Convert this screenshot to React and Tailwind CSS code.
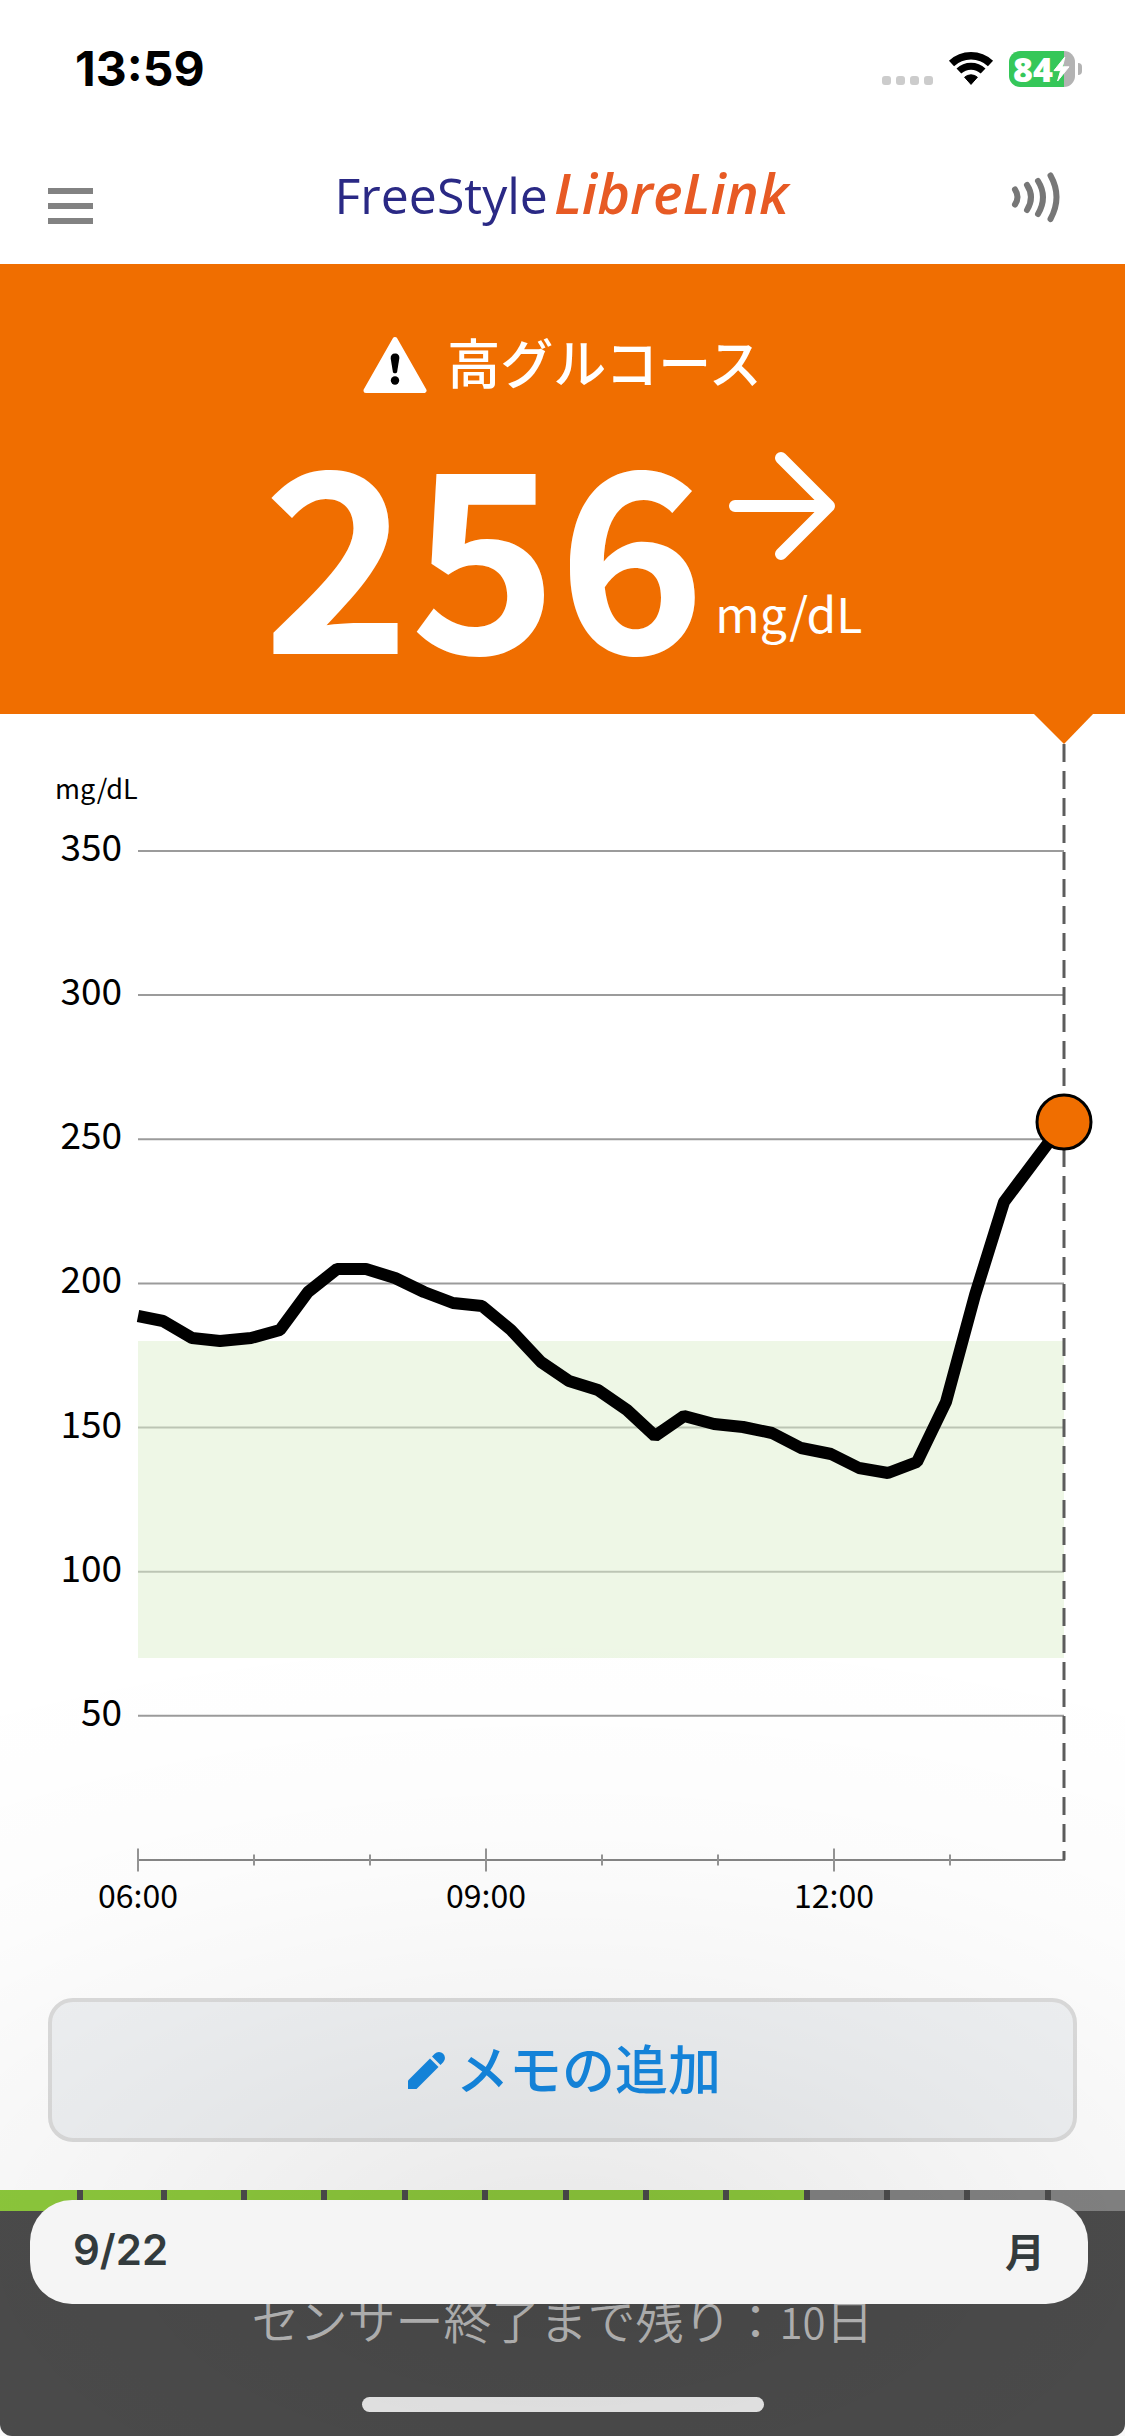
import React from 'react';

const JP = "font-['Noto_Sans_CJK_JP',sans-serif]";

const GRID = [350, 300, 250, 200, 150, 100, 50];
const yOf = (mgdl) => 1146 - (mgdl * 144.15) / 50;

const TICKS = [
  { x: 138, label: '06:00' },
  { x: 254 },
  { x: 370 },
  { x: 486, label: '09:00' },
  { x: 602 },
  { x: 718 },
  { x: 834, label: '12:00' },
  { x: 950 },
];

const TRACE = [
  [138, 602], [163, 607], [192, 624], [220, 627], [251, 624], [280, 616],
  [308, 578], [337, 555], [366, 555], [395, 564], [424, 578], [453, 589],
  [482, 592], [511, 616], [541, 648], [569, 667], [598, 676], [627, 696],
  [655, 722], [684, 702], [714, 710], [743, 713], [772, 719], [801, 734],
  [831, 740], [859, 754], [888, 759], [917, 748], [946, 688], [975, 581],
  [1004, 488], [1064, 408],
];

const DAYS = [77, 78, 74, 74, 75, 74, 75, 74, 74, 75, 74, 74, 75, 74];
const DAYS_USED = 10;

function StatusBar() {
  return (
    <div className="flex h-[138px] items-center justify-between pl-[75px] pr-[43px]">
      <span className="font-['Inter',sans-serif] text-[48px] font-bold leading-[48px] text-black">
        13:59
      </span>
      <div className="flex items-center gap-[15px]">
        <svg width="51" height="36" viewBox="0 0 51 36" fill="#cccccc" aria-hidden="true">
          {[0, 14, 28, 42].map((x) => (
            <rect key={x} x={x} y="25" width="9" height="9" rx="3" />
          ))}
        </svg>
        <svg width="46" height="36" viewBox="0 0 46 36" fill="none" aria-label="Wi-Fi">
          <path d="M3.5 12.4a28.5 28.5 0 0 1 39 0" stroke="#000" strokeWidth="7.5" />
          <path d="M10.9 20a17.7 17.7 0 0 1 24.2 0" stroke="#000" strokeWidth="7" />
          <path d="M16.6 26.2a9.8 9.8 0 0 1 12.8 0L23 33.4z" fill="#000" stroke="#000" strokeWidth="1" strokeLinejoin="round" />
        </svg>
        <div className="flex items-center gap-[3px]">
          <div className="flex h-9 w-[66px] items-center rounded-[11px] bg-[linear-gradient(90deg,#35c759_55px,#b3b3b3_55px)] pl-1">
            <span className="font-['Open_Sans',sans-serif] text-[34px] font-extrabold leading-9 text-white">
              84
            </span>
            <svg className="shrink-0" width="17" height="26" viewBox="0 0 17 26" fill="#fff" aria-hidden="true">
              <path d="M11.8 1 1 14.6h6.6L4.6 25 16 10.8H9.6z" stroke="#fff" strokeWidth="1" strokeLinejoin="round" />
            </svg>
          </div>
          <div className="h-3 w-1 rounded-r-full bg-[#b3b3b3]" />
        </div>
      </div>
    </div>
  );
}

function NavBar() {
  return (
    <div className="grid h-[126px] grid-cols-[1fr_auto_1fr] items-center pl-12 pr-16">
      <button type="button" aria-label="メニュー" className="flex w-[45px] flex-col gap-[9px] pt-[10px]">
        <span className="h-1.5 w-full bg-[#828282]" />
        <span className="h-1.5 w-full bg-[#828282]" />
        <span className="h-1.5 w-full bg-[#828282]" />
      </button>
      <h1 className="flex items-baseline gap-1.5 pb-4 pl-3.5 font-['Open_Sans',sans-serif] leading-[60px]">
        <span className="text-[50px] font-medium text-[#2a2985]">FreeStyle</span>
        <span className="text-[56px] font-semibold italic text-[#e75a24]">LibreLink</span>
      </h1>
      <button type="button" aria-label="スキャン" className="justify-self-end pb-2">
        <svg width="50" height="54" viewBox="0 0 50 54" fill="none" stroke="#777" strokeWidth="6" strokeLinecap="round">
          <path d="M4 19.500q5 7.500 0 15" />
          <path d="M16 15q8 12 0 25" />
          <path d="M27 11q10 16 0 33" />
          <path d="M39.500 5.500q12 21.500 0 43.500" />
        </svg>
      </button>
    </div>
  );
}

function Reading() {
  return (
    <section className={`${JP} flex flex-col items-center bg-[#f06e00] pb-[69px] pt-[70px] text-white`}>
      <div className="flex items-center gap-5">
        <svg width="64" height="58" viewBox="0 0 64 58" aria-hidden="true">
          <path d="M32 3.500 61 54.500H3z" fill="#fff" stroke="#fff" strokeWidth="5" strokeLinejoin="round" />
          <path d="M32 17.500c-3 0-4.600 2-4.300 5l2.200 13.500c.3 1.800 3.900 1.800 4.200 0l2.200-13.500c.3-3-1.300-5-4.300-5z" fill="#000" />
          <circle cx="32" cy="44.500" r="4.200" fill="#000" />
        </svg>
        <h2 className="pb-2 text-[53px] font-medium leading-[54px]">高グルコース</h2>
      </div>
      <div className="mt-[49px] flex items-start gap-2.5">
        <span className="text-[250px] font-bold leading-[200px]">256</span>
        <div className="flex flex-col gap-[27px] pt-1.5">
          <svg className="ml-[13px]" width="110" height="110" viewBox="0 0 110 110" fill="none" stroke="#fff" strokeWidth="12" strokeLinecap="round" strokeLinejoin="round" aria-label="横ばい">
            <path d="M7 55h94M53 7l48 48-48 48" />
          </svg>
          <span className="text-[48px] leading-[48px]">mg/dL</span>
        </div>
      </div>
    </section>
  );
}

function Chart() {
  return (
    <svg
      className={`${JP} block h-auto w-full`}
      viewBox="0 0 1125 1220"
      role="img"
      aria-label="グルコースグラフ"
    >
      <text x="55" y="85" fontSize="27">mg/dL</text>
      {GRID.map((v) => (
        <g key={v}>
          <line x1="138" x2="1064" y1={yOf(v)} y2={yOf(v)} stroke="#9b9b9b" strokeWidth="2" />
          <text x="122" y={yOf(v) + 10} fontSize="37" textAnchor="end">
            {v}
          </text>
        </g>
      ))}
      <rect x="138" y="627" width="926" height="317" fill="#deefce" fillOpacity="0.5" />
      <line x1="138" x2="1065" y1="1146" y2="1146" stroke="#858585" strokeWidth="2" />
      {TICKS.map(({ x, label }) => (
        <g key={x}>
          <line
            x1={x}
            x2={x}
            y1={label ? 1134.500 : 1140.500}
            y2={label ? 1157.500 : 1151.500}
            stroke="#959595"
            strokeWidth="2"
          />
          {label && (
            <text x={x} y="1194" fontSize="32" textAnchor="middle">
              {label}
            </text>
          )}
        </g>
      ))}
      <line x1="1064" x2="1064" y1="30" y2="1146" stroke="#5c5c5c" strokeWidth="3" strokeDasharray="18 9" />
      <path d="M1033 -1h61L1064 30z" fill="#f06e00" />
      <polyline points={TRACE.map((p) => p.join(',')).join(' ')} fill="none" stroke="#000" strokeWidth="12" strokeLinejoin="bevel" />
      <circle cx="1064" cy="408" r="27" fill="#f06e00" stroke="#000" strokeWidth="3" />
    </svg>
  );
}

function AddNote() {
  return (
    <div className="px-12 pb-12 pt-16">
      <button
        type="button"
        className={`${JP} flex h-36 w-full items-center justify-center gap-[11px] rounded-[25px] border-4 border-[#dcdcdc] bg-[#f0f2f4] pl-1 text-[53px] font-medium leading-[60px] text-[#1589e3]`}
      >
        <svg width="37" height="37" viewBox="0 0 37 37" fill="currentColor" aria-hidden="true">
          <path d="M0 28.500 22 6.500 30.500 15 8.500 37H0z" />
          <path d="m24 4.500 2.700-2.700a6 6 0 0 1 8.500 8.500L32.500 13z" />
        </svg>
        <span className="pb-1.5">メモの追加</span>
      </button>
    </div>
  );
}

function SensorFooter() {
  return (
    <footer className="relative flex flex-1 flex-col rounded-b-xl bg-[#4c4c4c]">
      <div className="flex h-[21px] gap-1.5" role="img" aria-label="センサー使用日数">
        {DAYS.map((w, i) => (
          <span
            key={i}
            className={i < DAYS_USED ? 'basis-0 bg-[#8eca3c]' : 'basis-0 bg-[#838383]'}
            style={{ flexGrow: w }}
          />
        ))}
      </div>
      <p className={`${JP} pt-[79px] text-center text-[48px] font-[350] leading-[56px] text-[#b8b8b8]`}>
        センサー終了まで残り：<span className="text-[42px] leading-none">10</span>日
      </p>
      <div className="mt-auto flex justify-center pb-6 pt-10">
        <div className="h-[15px] w-[402px] rounded-full bg-[#ebebeb]" />
      </div>
    </footer>
  );
}

function DateBanner() {
  return (
    <div className="absolute bottom-[132px] left-[30px] right-[37px] flex h-[104px] items-center justify-between rounded-[42px] bg-[#f5f5f5] px-[43px] pb-1 text-[#333b3d]">
      <span className="font-['Inter',sans-serif] text-[42px] font-semibold leading-[52px]">9/22</span>
      <span className={`${JP} text-[40px] font-bold leading-[52px]`}>月</span>
    </div>
  );
}

export default function App() {
  return (
    <main className="relative flex min-h-screen w-full flex-col overflow-hidden bg-white text-black">
      <StatusBar />
      <NavBar />
      <Reading />
      <Chart />
      <AddNote />
      <SensorFooter />
      <div className="pointer-events-none absolute inset-x-0 bottom-0 h-[860px] bg-[radial-gradient(ellipse_115%_75%_at_50%_78%,rgba(0,0,0,0.088)_0%,rgba(0,0,0,0.08)_10%,rgba(0,0,0,0.045)_35%,rgba(0,0,0,0.03)_45%,rgba(0,0,0,0.012)_65%,rgba(0,0,0,0.004)_86%,transparent_100%)]" />
      <DateBanner />
    </main>
  );
}
